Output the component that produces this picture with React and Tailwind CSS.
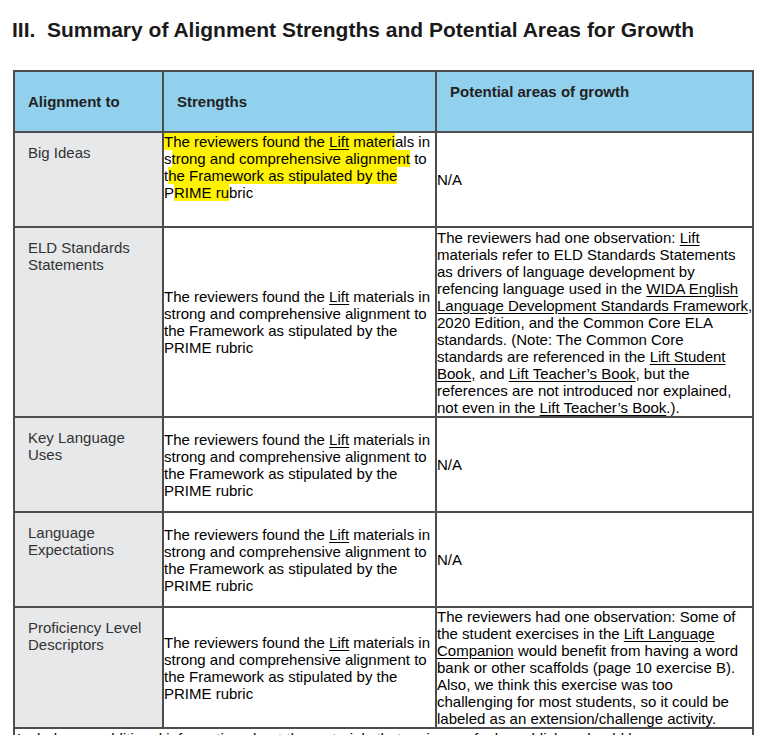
import React from "react";

const U = ({ children }) => <span className="underline underline-offset-2">{children}</span>;

const Hl = ({ children }) => <span className="bg-[#fff200]">{children}</span>;

const strengthText = (
  <>
    The reviewers found the <U>Lift</U> materials in
    <br />
    strong and comprehensive alignment to
    <br />
    the Framework as stipulated by the
    <br />
    PRIME rubric
  </>
);

const rows = [
  {
    label: "Big Ideas",
    height: "h-[95px]",
    strengthTop: true,
    strengths: (
      <>
        <Hl>
          The reviewers found the <U>Lift</U> materi
        </Hl>
        als in
        <br />s<Hl>trong and comprehensive alignment</Hl> to
        <br />
        t<Hl>he Framework as stipulated by the </Hl>
        <br />P<Hl>RIME ru</Hl>bric
      </>
    ),
    growth: "N/A",
  },
  {
    label: (
      <>
        ELD Standards
        <br />
        Statements
      </>
    ),
    height: "h-[190px]",
    strengths: strengthText,
    growth: (
      <>
        The reviewers had one observation: <U>Lift</U>
        <br />
        materials refer to ELD Standards Statements
        <br />
        as drivers of language development by
        <br />
        refencing language used in the <U>WIDA English</U>
        <br />
        <U>Language Development Standards Framework</U>,
        <br />
        2020 Edition, and the Common Core ELA
        <br />
        standards. (Note: The Common Core
        <br />
        standards are referenced in the <U>Lift Student</U>
        <br />
        <U>Book</U>, and <U>Lift Teacher’s Book</U>, but the
        <br />
        references are not introduced nor explained,
        <br />
        not even in the <U>Lift Teacher’s Book</U>.).
      </>
    ),
  },
  {
    label: (
      <>
        Key Language
        <br />
        Uses
      </>
    ),
    height: "h-[95px]",
    strengths: strengthText,
    growth: "N/A",
  },
  {
    label: (
      <>
        Language
        <br />
        Expectations
      </>
    ),
    height: "h-[95px]",
    strengths: strengthText,
    growth: "N/A",
  },
  {
    label: (
      <>
        Proficiency Level
        <br />
        Descriptors
      </>
    ),
    height: "h-[121px]",
    strengths: strengthText,
    growth: (
      <>
        The reviewers had one observation: Some of
        <br />
        the student exercises in the <U>Lift Language</U>
        <br />
        <U>Companion</U> would benefit from having a word
        <br />
        bank or other scaffolds (page 10 exercise B).
        <br />
        Also, we think this exercise was too
        <br />
        challenging for most students, so it could be
        <br />
        labeled as an extension/challenge activity.
      </>
    ),
  },
];

export default function App() {
  return (
    <div className="min-h-[735px] bg-white font-['Liberation_Sans',Arial,sans-serif] text-black overflow-hidden">
      <h1 className="pl-[12px] pt-[17px] text-[21px] leading-[25px] font-bold text-[#1a1a1a] whitespace-pre">
        III.  Summary of Alignment Strengths and Potential Areas for Growth
      </h1>

      <table className="ml-[13px] mt-[28px] w-[739px] table-fixed border-collapse text-[15px] leading-[17px]">
        <colgroup>
          <col className="w-[149px]" />
          <col className="w-[273px]" />
          <col className="w-[317px]" />
        </colgroup>
        <thead>
          <tr className="h-[61px] bg-[#92d1ee] font-bold text-[#222]">
            <th className="border-2 border-[#4d4d4d] pl-[13px] text-left align-middle font-bold">
              Alignment to
            </th>
            <th className="border-2 border-[#4d4d4d] pl-[13px] text-left align-middle font-bold">
              Strengths
            </th>
            <th className="border-2 border-[#4d4d4d] pl-[13px] pt-[11px] text-left align-top font-bold">
              Potential areas of growth
            </th>
          </tr>
        </thead>
        <tbody>
          {rows.map((row, i) => (
            <tr key={i} className={row.height}>
              <td className="border-2 border-[#4d4d4d] bg-[#e7e8ea] pl-[13px] pt-[11px] align-top text-[#333]">
                {row.label}
              </td>
              <td
                className={`border-2 border-[#4d4d4d] p-0 whitespace-nowrap ${
                  row.strengthTop ? "align-top" : "align-middle"
                }`}
              >
                {row.strengths}
              </td>
              <td className="border-2 border-[#4d4d4d] p-0 align-middle whitespace-nowrap">
                {row.growth}
              </td>
            </tr>
          ))}
          <tr>
            <td
              colSpan={3}
              className="border-2 border-[#4d4d4d] pl-[2px] pt-[1px] pb-[4px] align-top text-[15px]"
            >
              Include any additional information about the materials that reviewers feel a publisher should know.
            </td>
          </tr>
        </tbody>
      </table>
    </div>
  );
}
